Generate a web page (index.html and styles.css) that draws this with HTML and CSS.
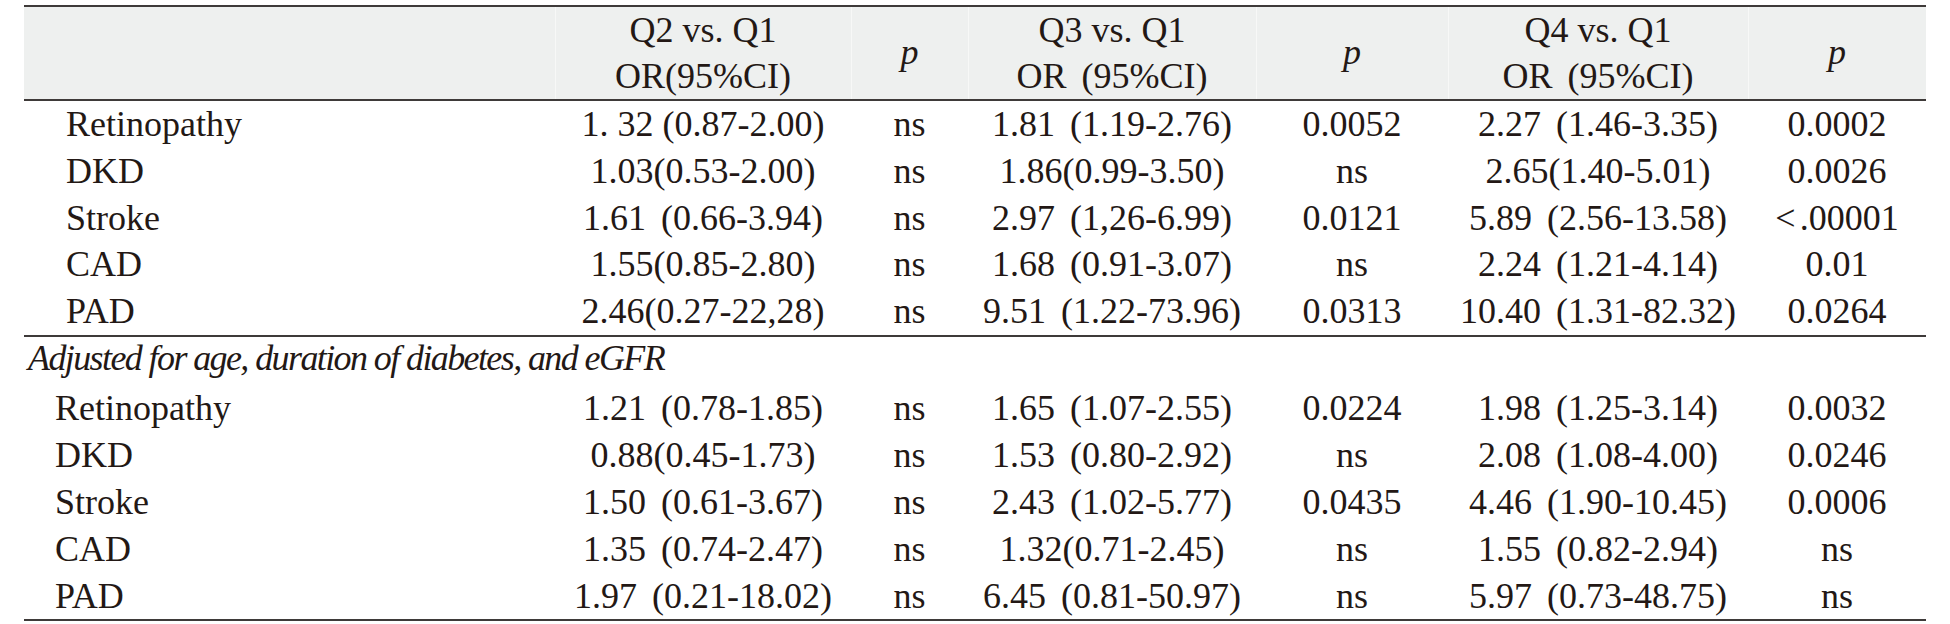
FILE: index.html
```html
<!DOCTYPE html>
<html lang="en">
<head>
<meta charset="utf-8">
<title>Odds ratios by quartile</title>
<link rel="stylesheet" href="styles.css">
</head>
<body>
<table class="or-table">
  <colgroup>
    <col class="c-label">
    <col class="c-q2">
    <col class="c-p1">
    <col class="c-q3">
    <col class="c-p2">
    <col class="c-q4">
    <col class="c-p3">
  </colgroup>
  <thead>
    <tr>
      <th class="h-label"></th>
      <th class="h-or">Q2 vs. Q1<br>OR(95%CI)</th>
      <th class="h-p">p</th>
      <th class="h-or">Q3 vs. Q1<br>OR <span class="fw">(95%CI)</span></th>
      <th class="h-p">p</th>
      <th class="h-or">Q4 vs. Q1<br>OR <span class="fw">(95%CI)</span></th>
      <th class="h-p">p</th>
    </tr>
  </thead>
  <tbody class="grp grp-crude">
    <tr><td class="lbl">Retinopathy</td><td>1. 32 (0.87-2.00)</td><td>ns</td><td>1.81 <span class="fw">(1.19-2.76)</span></td><td>0.0052</td><td>2.27 <span class="fw">(1.46-3.35)</span></td><td>0.0002</td></tr>
    <tr><td class="lbl">DKD</td><td>1.03(0.53-2.00)</td><td>ns</td><td>1.86(0.99-3.50)</td><td>ns</td><td>2.65(1.40-5.01)</td><td>0.0026</td></tr>
    <tr><td class="lbl">Stroke</td><td>1.61 <span class="fw">(0.66-3.94)</span></td><td>ns</td><td>2.97 <span class="fw">(1,26-6.99)</span></td><td>0.0121</td><td>5.89 <span class="fw">(2.56-13.58)</span></td><td><span class="lt">&lt;</span>.00001</td></tr>
    <tr><td class="lbl">CAD</td><td>1.55(0.85-2.80)</td><td>ns</td><td>1.68 <span class="fw">(0.91-3.07)</span></td><td>ns</td><td>2.24 <span class="fw">(1.21-4.14)</span></td><td>0.01</td></tr>
    <tr><td class="lbl">PAD</td><td>2.46(0.27-22,28)</td><td>ns</td><td>9.51 <span class="fw">(1.22-73.96)</span></td><td>0.0313</td><td>10.40 <span class="fw">(1.31-82.32)</span></td><td>0.0264</td></tr>
  </tbody>
  <tbody class="grp grp-adj">
    <tr class="sub"><td class="sub-title" colspan="7">Adjusted for age, duration of diabetes, and eGFR</td></tr>
    <tr><td class="lbl">Retinopathy</td><td>1.21 <span class="fw">(0.78-1.85)</span></td><td>ns</td><td>1.65 <span class="fw">(1.07-2.55)</span></td><td>0.0224</td><td>1.98 <span class="fw">(1.25-3.14)</span></td><td>0.0032</td></tr>
    <tr><td class="lbl">DKD</td><td>0.88(0.45-1.73)</td><td>ns</td><td>1.53 <span class="fw">(0.80-2.92)</span></td><td>ns</td><td>2.08 <span class="fw">(1.08-4.00)</span></td><td>0.0246</td></tr>
    <tr><td class="lbl">Stroke</td><td>1.50 <span class="fw">(0.61-3.67)</span></td><td>ns</td><td>2.43 <span class="fw">(1.02-5.77)</span></td><td>0.0435</td><td>4.46 <span class="fw">(1.90-10.45)</span></td><td>0.0006</td></tr>
    <tr><td class="lbl">CAD</td><td>1.35 <span class="fw">(0.74-2.47)</span></td><td>ns</td><td>1.32(0.71-2.45)</td><td>ns</td><td>1.55 <span class="fw">(0.82-2.94)</span></td><td>ns</td></tr>
    <tr class="last"><td class="lbl">PAD</td><td>1.97 <span class="fw">(0.21-18.02)</span></td><td>ns</td><td>6.45 <span class="fw">(0.81-50.97)</span></td><td>ns</td><td>5.97 <span class="fw">(0.73-48.75)</span></td><td>ns</td></tr>
  </tbody>
</table>
</body>
</html>
```

FILE: styles.css
```css
html, body {
  margin: 0;
  padding: 0;
  background: #ffffff;
}

body {
  font-family: "Liberation Serif", "Times New Roman", serif;
  color: #231815;
}

.or-table {
  table-layout: fixed;
  width: 1902px;
  margin: 5px 0 0 24px;
  border-collapse: separate;
  border-spacing: 0;
  font-size: 36px;
}

.c-label { width: 531px; }
.c-q2 { width: 296px; }
.c-p1 { width: 117px; }
.c-q3 { width: 288px; }
.c-p2 { width: 192px; }
.c-q4 { width: 300px; }
.c-p3 { width: 178px; }

.or-table th {
  background: #eef0ef;
  font-weight: normal;
  line-height: 46px;
  padding: 0;
  text-align: center;
  vertical-align: middle;
  border-top: 2px solid #3e3a39;
  border-bottom: 2px solid #3e3a39;
  white-space: nowrap;
}

.or-table th + th {
  box-shadow: inset 1px 0 0 #f7f8f7;
}

.or-table th.h-p {
  font-style: italic;
  padding-bottom: 2px;
}

.fw {
  margin-left: 6px;
}

.lt {
  margin-right: 4px;
}

.or-table td {
  padding: 0;
  line-height: 46.8px;
  text-align: center;
  white-space: nowrap;
}

.or-table td.lbl {
  text-align: left;
  padding-left: 42px;
}

.grp-adj td.lbl {
  padding-left: 31px;
}

.or-table tr.sub td.sub-title {
  text-align: left;
  font-style: italic;
  letter-spacing: -1.6px;
  line-height: 42px;
  padding: 0 0 6.5px 4px;
  border-top: 2px solid #3e3a39;
}

.or-table tr.last td {
  border-bottom: 2px solid #3e3a39;
}
```
